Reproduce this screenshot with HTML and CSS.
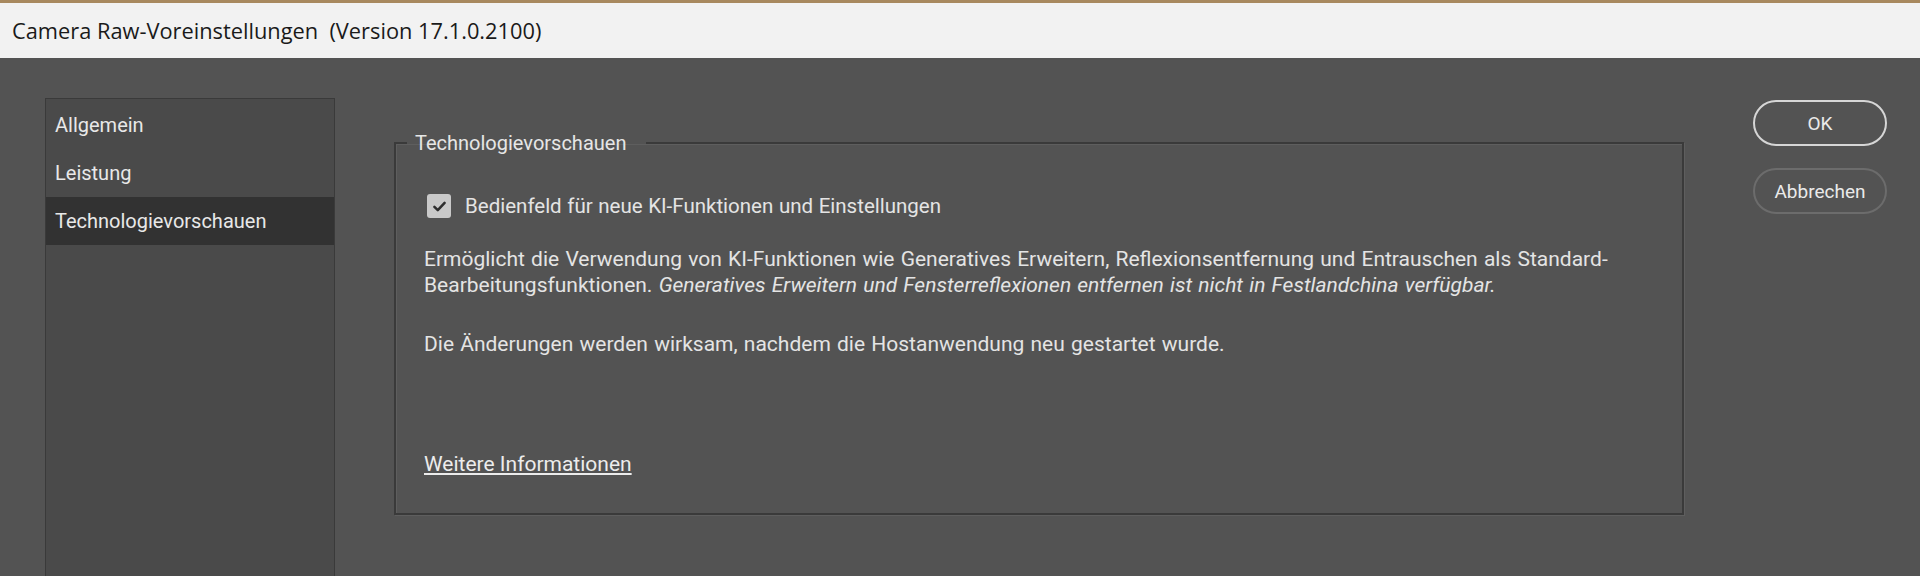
FILE: index.html
```html
<!DOCTYPE html>
<html lang="de">
<head>
<meta charset="utf-8">
<title>Camera Raw-Voreinstellungen</title>
<link rel="stylesheet" href="styles.css">
</head>
<body>
<div class="titlebar"><span class="title">Camera Raw-Voreinstellungen&nbsp; (Version 17.1.0.2100)</span></div>
<div class="main">
  <nav class="sidebar">
    <div class="nav-item">Allgemein</div>
    <div class="nav-item">Leistung</div>
    <div class="nav-item selected">Technologievorschauen</div>
  </nav>
  <div class="content">
    <fieldset class="group">
      <legend class="legend">Technologievorschauen</legend>
      <label class="check-row">
        <span class="checkbox"><svg width="16" height="16" viewBox="0 0 16 16"><path d="M3.2 8.4 L6.4 11.4 L12.8 4.6" fill="none" stroke="#2e2e2e" stroke-width="2.4" stroke-linecap="round" stroke-linejoin="round"/></svg></span>
        <span class="check-label">Bedienfeld für neue KI-Funktionen und Einstellungen</span>
      </label>
      <p class="desc">Ermöglicht die Verwendung von KI-Funktionen wie Generatives Erweitern, Reflexionsentfernung und Entrauschen als Standard-Bearbeitungsfunktionen. <em>Generatives Erweitern und Fensterreflexionen entfernen ist nicht in Festlandchina verfügbar.</em></p>
      <p class="desc note">Die Änderungen werden wirksam, nachdem die Hostanwendung neu gestartet wurde.</p>
      <a class="more" href="#">Weitere Informationen</a>
    </fieldset>
  </div>
  <div class="buttons">
    <button class="btn primary">OK</button>
    <button class="btn">Abbrechen</button>
  </div>
</div>
</body>
</html>
```
FILE: styles.css
```css
html, body { margin: 0; padding: 0; }
body {
  width: 1920px; height: 576px; overflow: hidden;
  background: #535353;
  font-family: Roboto, "Noto Sans", sans-serif;
  color: #e4e4e4;
}
.titlebar {
  height: 55px;
  border-top: 3px solid #a8895f;
  background: #f2f2f2;
  display: flex; align-items: center;
  padding-left: 12px;
}
.title { font-family: "Open Sans", sans-serif; font-size: 21.8px; color: #1a1a1a; }
.main { display: flex; padding: 40px 33px 0 45px; align-items: flex-start; }
.sidebar {
  width: 288px; height: 520px; flex: none;
  background: #4a4a4a; border: 1px solid #3a3a3a;
  padding-top: 2px; box-sizing: content-box;
}
.nav-item { height: 48px; line-height: 48px; padding-left: 9px; font-size: 20px; color: #e8e8e8; }
.nav-item.selected { background: #323232; }
.content { flex: 1; margin-left: 59px; margin-top: 32px; }
.group {
  margin: 0; padding: 37px 30px 36px 28px;
  border: 2px solid #3a3a3a; box-shadow: 1px 1px 0 #5e5e5e, inset 1px 1px 0 #5e5e5e;
}
.legend { padding: 0 20px 0 8px; margin-left: -17px; font-size: 20px; line-height: 26px; color: #e6e6e6; }
.check-row { display: flex; align-items: center; height: 26px; }
.checkbox { width: 24px; height: 24px; border-radius: 3px; background: #c9c9c9; display: flex; align-items: center; justify-content: center; margin-left: 3px; flex: none; }
.checkbox svg { width: 17px; height: 17px; }
.check-label { margin-left: 14px; font-size: 20.5px; word-spacing: 0.5px; }
.desc { margin: 27px 0 0; font-size: 21px; word-spacing: 1px; line-height: 26px; }
.desc.note { margin-top: 33px; }
.more { display: inline-block; margin-top: 95px; font-size: 21px; line-height: 25px; color: #ececec; }
.buttons { width: 134px; flex: none; margin-left: 69px; margin-top: 2px; display: flex; flex-direction: column; gap: 22px; }
.btn { height: 46px; border-radius: 23px; background: transparent; border: 2px solid #d6d6d6; color: #eaeaea; font-family: Roboto, sans-serif; font-size: 19px; padding: 0; }
.btn:not(.primary) { border-color: #6c6c6c; }
```
